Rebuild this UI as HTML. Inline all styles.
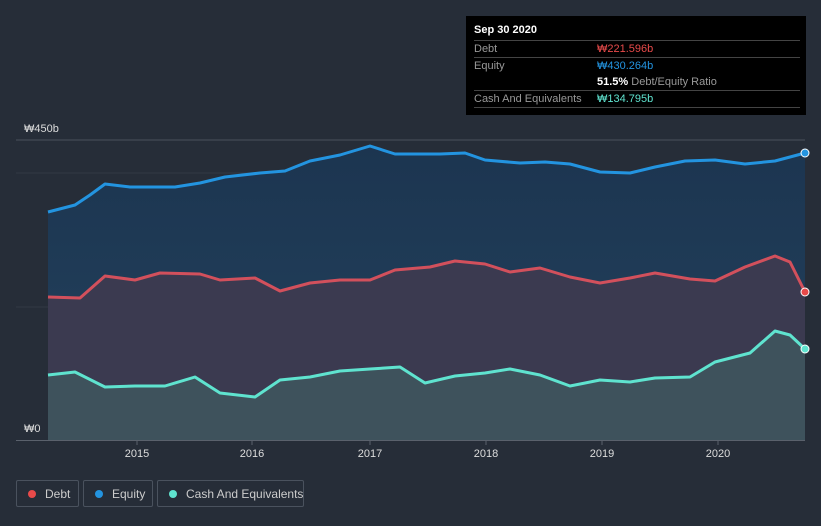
<!DOCTYPE html>
<html><head><meta charset="utf-8"><style>
body{margin:0;width:821px;height:526px;background:#262d38;font-family:"Liberation Sans","Noto Sans CJK KR",sans-serif;overflow:hidden;position:relative}
.tt{position:absolute;left:466px;top:16px;width:340px;height:99px;background:#000;color:#fff;font-size:11px}
.tt .r{position:absolute;left:8px;width:326px;border-top:1px solid #444;height:16px;line-height:16px}
.lab{color:#999}
.leg{position:absolute;top:480px;height:27px;border:1px solid #4a525e;border-radius:2px;color:#ccc;font-size:12px;line-height:26px;box-sizing:border-box;white-space:nowrap}
.leg i{position:absolute;left:11px;top:9px;width:8px;height:8px;border-radius:50%}
.leg span{position:absolute;left:28px}
</style></head><body>
<svg width="821" height="526" style="position:absolute;left:0;top:0">
<defs><linearGradient id="g" x1="0" y1="0" x2="0" y2="1"><stop offset="0" stop-color="#1c3550"/><stop offset="1" stop-color="#23425e"/></linearGradient></defs>
<line x1="16" y1="140" x2="805" y2="140" stroke="#4a515c"/>
<line x1="16" y1="173" x2="805" y2="173" stroke="#323945"/>
<line x1="16" y1="307" x2="805" y2="307" stroke="#323945"/>
<polygon fill="url(#g)" points="48,440 48,212 75,205 90,195 105,184 130,187 175,187 200,183 225,177 260,173 285,171 310,161 340,155 370,146 395,154 440,154 465,153 485,160 520,163 545,162 570,164 600,172 630,173 655,167 685,161 715,160 745,164 775,161 805,153 805,440"/>
<polygon fill="#3b3a50" points="48,440 48,297 80,298 105,276 135,280 160,273 200,274 220,280 255,278 280,291 310,283 340,280 370,280 395,270 430,267 455,261 485,264 510,272 540,268 570,277 600,283 630,278 655,273 690,279 715,281 745,267 775,256 790,262 805,292 805,440"/>
<polygon fill="#3e525c" points="48,440 48,375 75,372 105,387 135,386 165,386 195,377 220,393 255,397 280,380 310,377 340,371 370,369 400,367 425,383 455,376 485,373 510,369 540,375 570,386 600,380 630,382 655,378 690,377 715,362 750,353 775,331 790,335 805,349 805,440"/>
<g fill="none" stroke-width="3" stroke-linejoin="round">
<polyline stroke="#2394e0" points="48,212 75,205 90,195 105,184 130,187 175,187 200,183 225,177 260,173 285,171 310,161 340,155 370,146 395,154 440,154 465,153 485,160 520,163 545,162 570,164 600,172 630,173 655,167 685,161 715,160 745,164 775,161 805,153"/>
<polyline stroke="#d2505c" points="48,297 80,298 105,276 135,280 160,273 200,274 220,280 255,278 280,291 310,283 340,280 370,280 395,270 430,267 455,261 485,264 510,272 540,268 570,277 600,283 630,278 655,273 690,279 715,281 745,267 775,256 790,262 805,292"/>
<polyline stroke="#5fe3cf" points="48,375 75,372 105,387 135,386 165,386 195,377 220,393 255,397 280,380 310,377 340,371 370,369 400,367 425,383 455,376 485,373 510,369 540,375 570,386 600,380 630,382 655,378 690,377 715,362 750,353 775,331 790,335 805,349"/>
</g>
<circle cx="805" cy="153" r="4" fill="#2394e0" stroke="#fff"/>
<circle cx="805" cy="292" r="4" fill="#e84a4a" stroke="#fff"/>
<circle cx="805" cy="349" r="4" fill="#5fe3cf" stroke="#fff"/>
<line x1="16" y1="440.5" x2="805" y2="440.5" stroke="#5a616c"/>
<g stroke="#5a616c"><line x1="137" y1="440" x2="137" y2="445"/><line x1="252" y1="440" x2="252" y2="445"/><line x1="370" y1="440" x2="370" y2="445"/><line x1="486" y1="440" x2="486" y2="445"/><line x1="602" y1="440" x2="602" y2="445"/><line x1="718" y1="440" x2="718" y2="445"/></g>
<g fill="#ddd" font-size="11" text-anchor="middle"><text x="137" y="457">2015</text><text x="252" y="457">2016</text><text x="370" y="457">2017</text><text x="486" y="457">2018</text><text x="602" y="457">2019</text><text x="718" y="457">2020</text></g>
<text x="24" y="132" fill="#ddd" font-size="11">₩450b</text>
<text x="24" y="432" fill="#ddd" font-size="11">₩0</text>
</svg>
<div class="tt">
<div style="position:absolute;left:8px;top:8px;font-weight:bold">Sep 30 2020</div>
<div class="r" style="top:24px"><span class="lab">Debt</span><span style="position:absolute;left:123px;color:#e84a4a">₩221.596b</span></div>
<div class="r" style="top:41px"><span class="lab">Equity</span><span style="position:absolute;left:123px;color:#2394e0">₩430.264b</span></div>
<div class="r" style="top:58px;border:0"><span style="position:absolute;left:123px"><b>51.5%</b> <span class="lab">Debt/Equity Ratio</span></span></div>
<div class="r" style="top:74px"><span class="lab">Cash And Equivalents</span><span style="position:absolute;left:123px;color:#5fe3cf">₩134.795b</span></div>
<div class="r" style="top:91px;height:0"></div>
</div>
<div class="leg" style="left:16px;width:63px"><i style="background:#e84a4a"></i><span>Debt</span></div>
<div class="leg" style="left:83px;width:70px"><i style="background:#2394e0"></i><span>Equity</span></div>
<div class="leg" style="left:157px;width:147px"><i style="background:#5fe3cf"></i><span>Cash And Equivalents</span></div>
</body></html>
